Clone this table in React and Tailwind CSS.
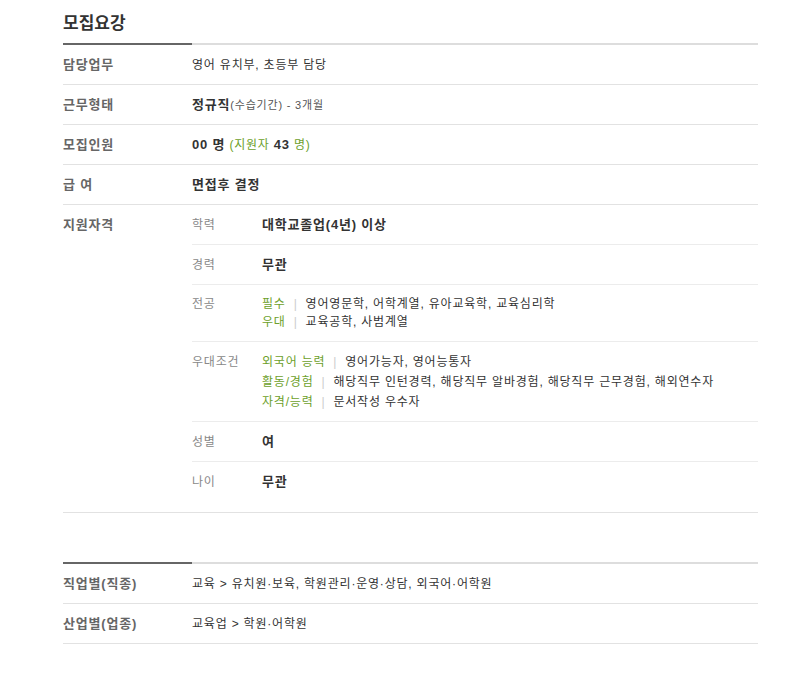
import React from 'react';

const green = 'text-[#6d9f2b]';

function Row({ label, children }) {
  return (
    <div className="flex h-[40px] items-center border-b border-[#e2e2e2]">
      <div className="w-[129px] text-[13px] font-bold text-[#666]">{label}</div>
      <div className="flex-1 text-[12px] text-[#333]">{children}</div>
    </div>
  );
}

function SubRow({ label, children, last, multi }) {
  return (
    <div
      className={`flex ${multi ? 'pt-[10px] pb-[9px]' : 'h-[40px] items-center'} ${
        last ? '' : 'border-b border-[#ececec]'
      }`}
    >
      <div className={`w-[70px] text-[12px] text-[#888] ${multi ? 'leading-[20px]' : ''}`}>{label}</div>
      <div className="flex-1 text-[12px] text-[#333]">{children}</div>
    </div>
  );
}

function Tagged({ items, lh }) {
  return (
    <div>
      {items.map(([tag, text]) => (
        <div key={tag} className={`${lh} flex`}>
          <span className={green}>{tag}</span>
          <span className="mx-[8px] text-[#ccc]">|</span>
          <span>{text}</span>
        </div>
      ))}
    </div>
  );
}

function SectionBar() {
  return (
    <div className="flex h-[2px]">
      <div className="w-[129px] bg-[#666]" />
      <div className="flex-1 bg-[#ddd]" />
    </div>
  );
}

export default function App() {
  return (
    <div className="min-h-screen bg-white font-['Liberation_Sans','Noto_Sans_CJK_KR',sans-serif]">
      <div className="ml-[63px] w-[695px]">
        <h2 className="h-[43px] pt-[12px] text-[17px] font-bold leading-[24px] text-[#333]">모집요강</h2>
        <SectionBar />

        <div className="tracking-[0.8px]">
          <Row label="담당업무">영어 유치부, 초등부 담당</Row>
          <Row label="근무형태">
            <b className="text-[13px]">정규직</b>
            <span className="text-[11px] text-[#555]">(수습기간) - 3개월</span>
          </Row>
          <Row label="모집인원">
            <b className="text-[13px]">00 명</b>{' '}
            <span className={green}>(지원자 </span>
            <b className="text-[13px]">43</b>
            <span className={green}> 명)</span>
          </Row>
          <Row label="급 여">
            <b className="text-[13px]">면접후 결정</b>
          </Row>

          {/* 지원자격 */}
          <div className="flex border-b border-[#e2e2e2] pb-[10px]">
            <div className="w-[129px] text-[13px] font-bold leading-[39px] text-[#666]">지원자격</div>
            <div className="flex-1">
              <SubRow label="학력">
                <b className="text-[13px]">대학교졸업(4년) 이상</b>
              </SubRow>
              <SubRow label="경력">
                <b className="text-[13px]">무관</b>
              </SubRow>
              <div className="flex border-b border-[#ececec] pt-[10px] pb-[10px]">
                <div className="w-[70px] text-[12px] leading-[18px] text-[#888]">전공</div>
                <div className="flex-1 text-[12px] text-[#333]">
                  <Tagged
                    lh="leading-[18px]"
                    items={[
                      ['필수', '영어영문학, 어학계열, 유아교육학, 교육심리학'],
                      ['우대', '교육공학, 사범계열'],
                    ]}
                  />
                </div>
              </div>
              <SubRow label="우대조건" multi>
                <Tagged
                  lh="leading-[20px]"
                  items={[
                    ['외국어 능력', '영어가능자, 영어능통자'],
                    ['활동/경험', '해당직무 인턴경력, 해당직무 알바경험, 해당직무 근무경험, 해외연수자'],
                    ['자격/능력', '문서작성 우수자'],
                  ]}
                />
              </SubRow>
              <SubRow label="성별">
                <b className="text-[13px]">여</b>
              </SubRow>
              <SubRow label="나이" last>
                <b className="text-[13px]">무관</b>
              </SubRow>
            </div>
          </div>
        </div>

        <div className="h-[49px]" />
        <SectionBar />
        <div className="tracking-[0.8px]">
          <Row label="직업별(직종)">교육 &gt; 유치원·보육, 학원관리·운영·상담, 외국어·어학원</Row>
          <Row label="산업별(업종)">교육업 &gt; 학원·어학원</Row>
        </div>
      </div>
    </div>
  );
}
